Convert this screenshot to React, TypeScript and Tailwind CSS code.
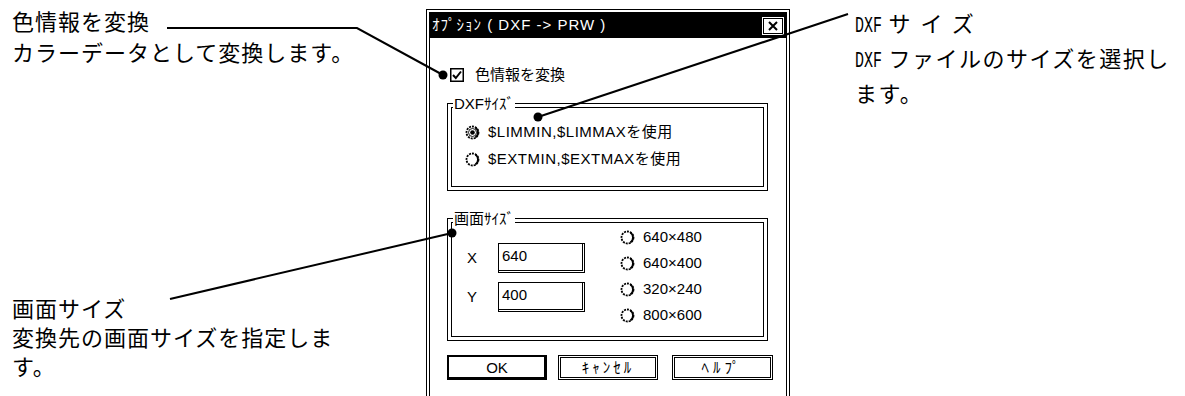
import React from 'react';

const Radio = ({ on = false }: { on?: boolean }) => (
  <svg width="15" height="15" viewBox="0 0 15 15" className="shrink-0">
    <circle cx="7.5" cy="7.5" r="6" fill="white" stroke="black" strokeWidth="1.8" strokeDasharray="2 1" />
    <path d="M10.3 2.5 A6 6 0 0 1 10.3 12.5" fill="none" stroke="black" strokeWidth="1.8" />
    {on && <circle cx="7.5" cy="7.5" r="4" fill="none" stroke="black" strokeWidth="0.9" />}
    {on && <circle cx="7.5" cy="7.5" r="2.3" fill="black" />}
  </svg>
);

const Checkbox = () => (
  <svg width="14" height="14" viewBox="0 0 14 14" className="shrink-0">
    <rect x="0.75" y="0.75" width="12.5" height="12.5" fill="white" stroke="black" strokeWidth="1.5" />
    <polyline points="3,7 5.8,10 11,3.5" fill="none" stroke="black" strokeWidth="2" />
  </svg>
);

const Narrow = ({ children }: { children: React.ReactNode }) => (
  <span className="inline-block w-[27px] whitespace-nowrap">
    <span className="inline-block origin-left scale-x-[0.68] font-['Liberation_Mono',monospace] tracking-normal">{children}</span>
  </span>
);

const Group = ({ label, h, children }: { label: string; h: string; children: React.ReactNode }) => (
  <div className={`relative ml-[17px] w-[321px] border border-black p-[3px] ${h}`}>
    <div className="h-full border border-black">{children}</div>
    <span className="absolute -top-[9px] left-[5px] bg-white px-[1px] leading-[18px] whitespace-nowrap">{label}</span>
  </div>
);

const Option = ({ on, text }: { on?: boolean; text: string }) => (
  <div className="flex h-[26px] items-center gap-[8px] whitespace-nowrap">
    <Radio on={on} />
    <span>{text}</span>
  </div>
);

const Field = ({ value }: { value: string }) => (
  <div className="h-[30px] w-[87px] border-t border-l border-r-[3px] border-b-[3px] border-double border-black bg-white pl-[3px] leading-[24px]">
    {value}
  </div>
);

export default function App() {
  return (
    <div className="relative flex h-[396px] w-[1185px] overflow-hidden bg-white text-black">
      <div className="w-[426px] shrink-0 pl-[12px] text-[22px] font-['Noto_Sans_CJK_JP',sans-serif]">
        <div className="pt-[5px] leading-[31px] tracking-[1px] whitespace-nowrap">
          <p>色情報を変換</p>
          <p>カラーデータとして変換します。</p>
        </div>
        <div className="mt-[226px] leading-[29px] tracking-[1px] whitespace-nowrap">
          <p>画面サイズ</p>
          <p>変換先の画面サイズを指定しま</p>
          <p>す。</p>
        </div>
      </div>

      <div className="mt-[9px] w-[364px] shrink-0 self-start border border-black bg-white p-[2px] text-[15px] font-['Liberation_Sans','Noto_Sans_CJK_JP',sans-serif]">
        <div className="border border-black pb-[30px]">
          <div className="flex h-[25px] items-center justify-between bg-black pl-[2px] pr-[3px]">
            <span className="whitespace-nowrap tracking-[1px] text-white">ｵﾌﾟｼｮﾝ ( DXF -&gt; PRW )</span>
            <div className="flex h-[16px] w-[20px] items-center justify-center border border-black bg-white outline outline-1 outline-white">
              <svg width="10" height="10" viewBox="0 0 10 10">
                <path d="M1 1 L9 9 M9 1 L1 9" stroke="black" strokeWidth="2" />
              </svg>
            </div>
          </div>

          <div className="mt-[28px] flex h-[18px] items-center gap-[11px] pl-[20px]">
            <Checkbox />
            <span>色情報を変換</span>
          </div>

          <div className="mt-[19px]">
            <Group label="DXFｻｲｽﾞ" h="h-[88px]">
              <div className="pl-[13px] pt-[11px] tracking-[0.5px]">
                <div className="h-[27px]"><Option on text="$LIMMIN,$LIMMAXを使用" /></div>
                <div className="h-[27px]"><Option text="$EXTMIN,$EXTMAXを使用" /></div>
              </div>
            </Group>
          </div>

          <div className="mt-[27px]">
            <Group label="画面ｻｲｽﾞ" h="h-[123px]">
              <div className="flex">
                <div className="flex flex-col gap-[9px] pl-[15px] pt-[20px]">
                  <div className="flex items-center">
                    <span className="w-[31px]">X</span>
                    <Field value="640" />
                  </div>
                  <div className="flex items-center">
                    <span className="w-[31px]">Y</span>
                    <Field value="400" />
                  </div>
                </div>
                <div className="ml-[35px] pt-[1px]">
                  <Option text="640×480" />
                  <Option text="640×400" />
                  <Option text="320×240" />
                  <Option text="800×600" />
                </div>
              </div>
            </Group>
          </div>

          <div className="mt-[14px] flex pl-[17px]">
            <button className="h-[25px] w-[100px] border-2 border-black leading-none shadow-[inset_-1px_-1px_0_#000]">OK</button>
            <button className="ml-[11px] h-[25px] w-[100px] border-[3px] border-double border-black leading-none tracking-[3px]">ｷｬﾝｾﾙ</button>
            <button className="ml-[14px] h-[25px] w-[101px] border-[3px] border-double border-black leading-none tracking-[4px]">ﾍﾙﾌﾟ</button>
          </div>
        </div>
      </div>

      <div className="flex-1 pl-[65px] pt-[7px] text-[22px] leading-[30px] tracking-[1.5px] whitespace-nowrap font-['Noto_Sans_CJK_JP',sans-serif]">
        <p><Narrow>DXF</Narrow> <span className="tracking-[10px]">サイズ</span></p>
        <p><Narrow>DXF</Narrow> ファイルのサイズを選択し</p>
        <p>ます。</p>
      </div>

      <svg className="pointer-events-none absolute inset-0" width="1185" height="396" viewBox="0 0 1185 396">
        <polyline points="167,28 357,28 443,75" fill="none" stroke="black" strokeWidth="2" />
        <circle cx="443" cy="75" r="4.5" fill="black" />
        <line x1="848" y1="14" x2="538" y2="117" stroke="black" strokeWidth="2" />
        <circle cx="538" cy="117" r="4.5" fill="black" />
        <line x1="170" y1="299" x2="452" y2="233" stroke="black" strokeWidth="2" />
        <circle cx="452" cy="233" r="4.5" fill="black" />
      </svg>
    </div>
  );
}
